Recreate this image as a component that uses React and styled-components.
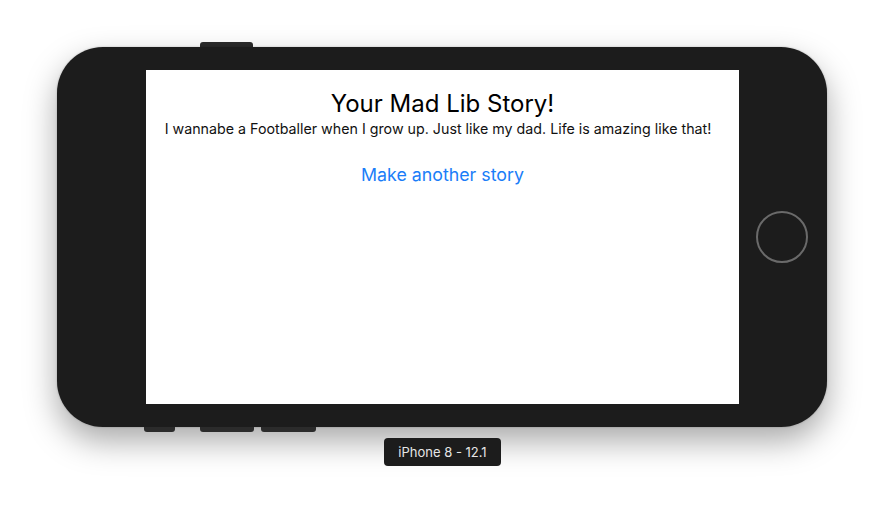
import styled, { createGlobalStyle } from "styled-components";

const GlobalStyle = createGlobalStyle`
  html, body {
    margin: 0;
    padding: 0;
    background: #fff;
  }
`;

const Page = styled.div`
  width: 885px;
  height: 510px;
  display: flex;
  flex-direction: column;
  align-items: flex-start;
  padding: 42px 0 0 57px;
  box-sizing: border-box;
  font-family: Inter, "Liberation Sans", sans-serif;
`;

const ButtonRow = styled.div`
  display: flex;
  padding-left: ${(props) => props.offset}px;
  height: 5px;
`;

const SideButton = styled.div`
  width: ${(props) => props.w}px;
  margin-left: ${(props) => props.gap || 0}px;
  height: 5px;
  background: #2b2b2b;
  border-radius: ${(props) => (props.bottom ? "0 0 3px 3px" : "3px 3px 0 0")};
`;

const Phone = styled.div`
  width: 770px;
  height: 380px;
  background: #1c1c1c;
  border-radius: 46px;
  box-shadow: 0 14px 32px rgba(0, 0, 0, 0.34), 0 0 2px rgba(0, 0, 0, 0.25);
  display: grid;
  grid-template-columns: 89px 593px 88px;
  grid-template-rows: 23px 334px 23px;
`;

const Screen = styled.div`
  grid-column: 2;
  grid-row: 2;
  background: #fff;
  display: flex;
  flex-direction: column;
  align-items: center;
  padding-top: 19px;
  box-sizing: border-box;
`;

const HomeArea = styled.div`
  grid-column: 3;
  grid-row: 2;
  display: flex;
  align-items: center;
  justify-content: center;
  padding-right: 2px;
`;

const HomeButton = styled.div`
  width: 52px;
  height: 52px;
  border-radius: 50%;
  border: 2px solid #6a6a6a;
  box-sizing: border-box;
`;

const Title = styled.h1`
  margin: 0;
  font-size: 24px;
  font-weight: 400;
  line-height: 30px;
  color: #000;
`;

const Story = styled.p`
  margin: 0;
  padding-right: 9px;
  font-size: 14.25px;
  line-height: 20px;
  color: #111;
`;

const LinkButton = styled.button`
  margin-top: 24px;
  border: none;
  background: none;
  padding: 0;
  font-family: inherit;
  font-size: 17.8px;
  line-height: 24px;
  color: #1a7df8;
  cursor: pointer;
`;

const Label = styled.div`
  align-self: center;
  margin: 6px 0 0 -57px;
  height: 28px;
  padding: 0 14px;
  display: flex;
  align-items: center;
  background: #1c1c1c;
  border-radius: 4px;
  color: #e6e6e6;
  font-size: 13px;
`;

export default function App() {
  return (
    <>
      <GlobalStyle />
      <Page>
        <ButtonRow offset={143}>
          <SideButton w={53} />
        </ButtonRow>
        <Phone>
          <Screen>
            <Title>Your Mad Lib Story!</Title>
            <Story>
              I wannabe a Footballer when I grow up. Just like my dad. Life is
              amazing like that!
            </Story>
            <LinkButton>Make another story</LinkButton>
          </Screen>
          <HomeArea>
            <HomeButton />
          </HomeArea>
        </Phone>
        <ButtonRow offset={87}>
          <SideButton w={31} bottom />
          <SideButton w={54} gap={25} bottom />
          <SideButton w={55} gap={7} bottom />
        </ButtonRow>
        <Label>iPhone 8 - 12.1</Label>
      </Page>
    </>
  );
}
